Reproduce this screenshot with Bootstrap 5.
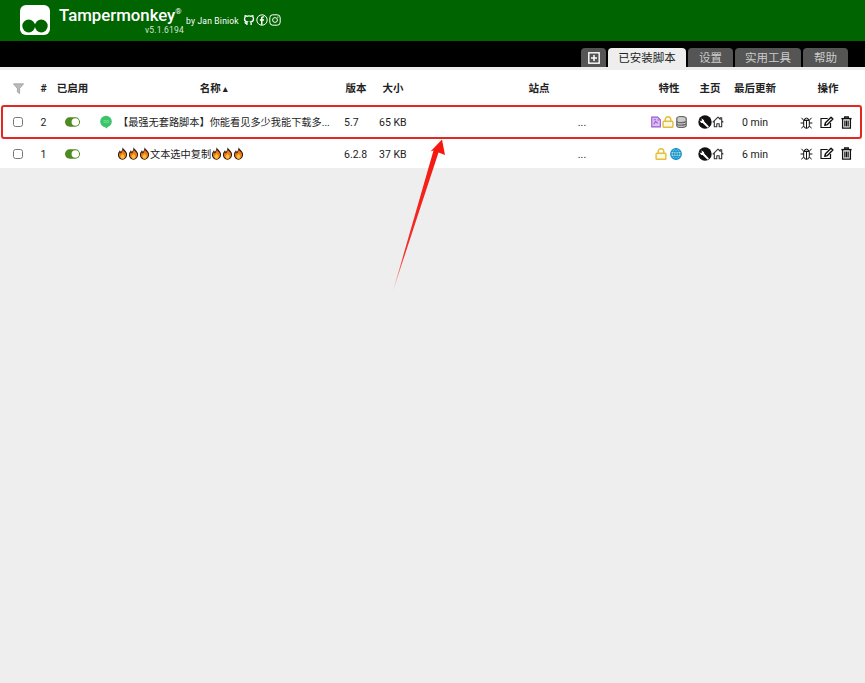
<!DOCTYPE html>
<html lang="zh">
<head>
<meta charset="utf-8">
<title>Tampermonkey</title>
<link href="https://cdn.jsdelivr.net/npm/bootstrap@5.3.0/dist/css/bootstrap.min.css" rel="stylesheet">
<style>
html,body{height:100%}
body{background:#eee;font-family:Roboto,"Noto Sans CJK SC",sans-serif;font-size:11px;color:#222;position:relative;overflow:hidden}
.tm-top{height:41px;background:#006400;color:#fff;padding-left:20px}
.tm-logo{width:30px;height:30px;margin-top:5px;flex:none}
.tm-title{margin-left:9px;position:relative;width:116px;height:41px}
.tm-name{font-size:16.8px;font-weight:500;line-height:20px;position:absolute;top:5px;left:0;white-space:nowrap}
.tm-name sup{font-size:8px;font-weight:400;top:-7px;position:relative;vertical-align:baseline;left:0}
.tm-ver{font-size:8.5px;line-height:10px;position:absolute;top:25px;right:-9px;color:#d5e6d5;white-space:nowrap;letter-spacing:.2px}
.tm-by{font-size:8.5px;margin-left:11px;margin-top:15px;line-height:12px;white-space:nowrap;letter-spacing:.2px}
.tm-soc{margin-top:14px;margin-left:4px;gap:1px}
.tm-bar{height:26px;background:#000;padding-right:17px}
.tm-tab{height:19px;background:#555;color:#ccc;border-radius:4px 4px 0 0;font-size:11.5px;line-height:20px;text-align:center;margin-left:2px;padding:0}
.tm-tab.tm-on{background:#eee;color:#222;height:19px}
.tm-tab-add{width:25px}.tm-tab1{width:78px}.tm-tab2{width:45px}.tm-tab3{width:66px}.tm-tab4{width:45px}
.tm-gap{height:3px}
.tm-table{table-layout:fixed;width:865px;margin:0;background:#fff;--bs-table-bg:#fff;font-size:10.5px}
.tm-table th,.tm-table td{border:0;padding:0;vertical-align:middle;white-space:nowrap;color:#222;box-shadow:none}
.tm-table th{height:35px;font-weight:700;font-size:10.5px;text-align:center;padding-top:2px}
.tm-r1 td{height:34px}
.tm-r2 td{height:29px}
.tm-r1 .tm-tx{padding-top:2px}
.tm-r2 .tm-tx{padding-top:3px}
.tm-check{width:10px;height:10px;margin:0;border:1px solid #777;border-radius:2px;display:block}
.tm-cc{padding-left:13px!important}
.tm-num{text-align:center}
.tm-sw{display:block;margin-left:10px}
.tm-r2 .tm-sw{margin-top:1px}
.tm-lname{font-size:10.2px}
.tm-r1 .tm-lname{padding-left:2px!important}
.tm-r2 .tm-lname{padding-left:1px!important}
.tm-pv{padding-left:6px!important}
.tm-ps{padding-left:5px!important}
.tm-site{text-align:center;padding-left:112px!important}
.tm-sh{padding-left:26px!important}
.tm-fh{padding-left:1px!important}
.tm-hh{padding-right:2px!important}
.tm-ah{padding-left:6px!important}
.tm-feat{text-align:right;padding-right:10px!important;line-height:0}
.tm-r2 .tm-feat{padding-right:15px!important}
.tm-feat svg,.tm-act svg,.tm-home svg{vertical-align:middle}
.tm-feat svg+svg{margin-left:-1px}
.tm-home{text-align:center;line-height:0;padding-right:1px!important}
.tm-mid{text-align:center}
.tm-act{line-height:0;padding-left:15px!important}
.tm-act svg{margin-right:7px}
.tm-flame{vertical-align:-2px}
.tm-box{position:absolute;left:1px;top:105px;width:861px;height:34px;border:2px solid #e5281f;border-radius:3px;pointer-events:none}
.tm-arrow{position:absolute;left:385px;top:135px;pointer-events:none}
</style>
</head>
<body>
<svg width="0" height="0" class="position-absolute">
<defs>
<symbol id="i-flame" viewBox="0 0 10 12"><path d="M5 .3C5.600 2 8 3 9 5.600c.9 2.900-1 6.100-4 6.100S.2 8.700 1 5.800C1.400 4.500 2.200 4 2.600 3c.5.600.8 1.100.9 1.700C4.500 3.500 5.100 2 5 .3z" fill="#2b1a10"/><path d="M5.100 2.200C5.700 3.500 7.700 4.400 8.200 6.200c.5 2.300-1.100 4.700-3.200 4.700S1.300 8.700 1.900 6.300c.3-.8.6-1.200.8-1.700.2.500.5 1 .6 1.500C4.400 5 5.200 3.700 5.100 2.200z" fill="#f0781e"/><path d="M5.100 6c.3.900 1.700 1.400 1.700 2.900 0 1.100-.8 1.900-1.800 1.900s-1.800-.8-1.800-1.900c0-1.300 1.400-1.600 1.900-2.900z" fill="#fbc02d"/></symbol>
<symbol id="i-toggle" viewBox="0 0 16 10"><rect x="0" y="0" width="16" height="10" rx="5" fill="#4d8a1f"/><circle cx="11" cy="5" r="4" fill="#fff"/></symbol>
<symbol id="i-lock" viewBox="0 0 12 12"><path d="M3.200 5.300V3.500a2.800 2.800 0 0 1 5.600 0v1.800" fill="none" stroke="#e3bd3c" stroke-width="1.400"/><rect x="1.100" y="5.300" width="9.800" height="5.900" rx=".8" fill="#fdf8e0" stroke="#e3bd3c" stroke-width="1.400"/></symbol>
<symbol id="i-wrench" viewBox="0 0 14 14"><circle cx="7" cy="7" r="6.700" fill="#111"/><path d="M3.500 3.200 6 5.200l.2 1.300 4.700 5-1.300 1.200-5-4.700-1.400-.1-1.800-2.700 1.500.9 1-.4z" fill="#fff"/></symbol>
<symbol id="i-home" viewBox="0 0 12 12"><path d="M.7 6.300 6 1.200l2.200 2.100V1.700h1.500V5l1.600 1.300M2.300 5.200v5.600h2.500V7.700h2.400v3.100h2.500V5.200" fill="none" stroke="#333" stroke-width="1.100" stroke-linejoin="round"/></symbol>
<symbol id="i-bug" viewBox="0 0 13 13"><path d="M4.300 4.300a2.200 2.200 0 0 1 4.400 0zM3.700 4.300h5.600v5.200a2.800 2.800 0 0 1-5.600 0zM6.500 4.300V12.300M1.500 1.800 3.700 4.300M11.500 1.800 9.300 4.300M.6 7h3.100M9.300 7h3.100M1.300 12.200l2.600-2.300M11.700 12.200 9.100 9.900" fill="none" stroke="#111" stroke-width="1"/></symbol>
<symbol id="i-edit" viewBox="0 0 14 13"><path d="M10.500 6.900v4.600H1V2.500h6.700" fill="none" stroke="#111" stroke-width="1.200"/><path d="M4.800 9.300l.7-2.600L11 1.200l1.900 1.900-5.500 5.500z" fill="#fff" stroke="#111" stroke-width="1.400" stroke-linejoin="round"/></symbol>
<symbol id="i-trash" viewBox="0 0 11 13"><path d="M.4 2.600h10.200" fill="none" stroke="#111" stroke-width="1.400"/><path d="M3.700 2.500V1h3.600v1.500M1.600 2.600v9.600h7.800V2.600M3.900 4.500v5.900M7.100 4.500v5.900" fill="none" stroke="#111" stroke-width="1.300"/><path d="M5.500 4.500v5.900" stroke="#111" stroke-width="1"/></symbol>
</defs>
</svg>

<header class="tm-top d-flex align-items-start">
  <svg class="tm-logo" viewBox="0 0 30 30"><rect width="30" height="30" rx="6" fill="#fff"/><circle cx="8.700" cy="21" r="6.400" fill="#006400"/><circle cx="21.300" cy="21" r="6.400" fill="#006400"/></svg>
  <div class="tm-title">
    <div class="tm-name">Tampermonkey<sup>®</sup></div>
    <div class="tm-ver">v5.1.6194</div>
  </div>
  <div class="tm-by">by Jan Biniok</div>
  <div class="tm-soc d-flex">
    <svg width="12" height="12" viewBox="0 0 12 12"><path d="M3.900 11V9.300C2.400 9.600 2 8.700 1.800 8.200M8.100 11V9.200c0-.7-.2-1-.5-1.300 1.600-.2 2.900-.9 2.900-3 0-.6-.2-1.200-.6-1.600.1-.6.1-1.200-.1-1.700-.6 0-1.200.3-1.700.7a5.500 5.500 0 0 0-4.200 0C3.400 1.900 2.800 1.600 2.200 1.600c-.2.500-.2 1.100-.1 1.700-.4.400-.6 1-.6 1.600 0 2.100 1.300 2.800 2.900 3-.3.300-.5.700-.5 1.300" fill="none" stroke="#fff" stroke-width="1.300"/></svg>
    <svg width="12" height="12" viewBox="0 0 12 12"><circle cx="6" cy="6" r="5.200" fill="none" stroke="#fff" stroke-width="1"/><path d="M6.500 10.800V6.800h1.400l.2-1.500H6.500v-.9c0-.5.200-.8.800-.8h.9V2.300H7c-1.300 0-2 .8-2 2v1H3.900v1.500H5v4z" fill="#fff"/></svg>
    <svg width="12" height="12" viewBox="0 0 12 12"><rect x=".8" y=".8" width="10.400" height="10.400" rx="3" fill="none" stroke="#fff" stroke-width="1"/><circle cx="6" cy="6" r="2.400" fill="none" stroke="#fff" stroke-width="1"/><circle cx="8.900" cy="3.100" r=".7" fill="#fff"/></svg>
  </div>
</header>

<nav class="tm-bar d-flex justify-content-end align-items-end">
  <div class="tm-tab tm-tab-add d-flex align-items-center justify-content-center">
    <svg width="12" height="12" viewBox="0 0 12 12"><rect x=".8" y=".8" width="10.400" height="10.400" fill="none" stroke="#fff" stroke-width="1.400"/><path d="M6 3v6M3 6h6" stroke="#fff" stroke-width="1.500"/></svg>
  </div>
  <div class="tm-tab tm-tab1 tm-on">已安装脚本</div>
  <div class="tm-tab tm-tab2">设置</div>
  <div class="tm-tab tm-tab3">实用工具</div>
  <div class="tm-tab tm-tab4">帮助</div>
</nav>
<div class="tm-gap"></div>

<table class="table tm-table">
  <colgroup>
    <col style="width:32px"><col style="width:23px"><col style="width:35px"><col style="width:26px"><col style="width:222px"><col style="width:36px"><col style="width:38px"><col style="width:228px"><col style="width:57px"><col style="width:28px"><col style="width:60px"><col style="width:80px">
  </colgroup>
  <thead>
    <tr>
      <th class="tm-cc"><svg class="d-block" width="11" height="11" viewBox="0 0 11 11"><path d="M.4.800h10.200L6.600 5.500v5L4.400 9V5.500z" fill="#bbb" stroke="#888" stroke-width=".6"/></svg></th>
      <th>#</th>
      <th>已启用</th>
      <th colspan="2">名称 <span class="small">▴</span></th>
      <th>版本</th>
      <th>大小</th>
      <th class="tm-sh">站点</th>
      <th class="tm-fh">特性</th>
      <th class="tm-hh">主页</th>
      <th>最后更新</th>
      <th class="tm-ah">操作</th>
    </tr>
  </thead>
  <tbody>
    <tr class="tm-r1">
      <td class="tm-cc"><input class="form-check-input tm-check" type="checkbox" aria-label="选择"></td>
      <td class="tm-num tm-tx">2</td>
      <td><svg class="tm-sw" width="15" height="10"><use href="#i-toggle"/></svg></td>
      <td><svg class="d-block ms-auto me-1" width="12" height="14" viewBox="0 0 12 14"><circle cx="6" cy="6.500" r="5.800" fill="#3cc46a"/><path d="M3 11l4 2.500 1-3z" fill="#3cc46a"/><text x="6" y="8" font-size="5" fill="#8fe2aa" text-anchor="middle">oo</text></svg></td>
      <td class="tm-lname tm-tx">【最强无套路脚本】你能看见多少我能下载多...</td>
      <td class="tm-pv tm-tx">5.7</td>
      <td class="tm-ps tm-tx">65 KB</td>
      <td class="tm-site tm-tx">...</td>
      <td class="tm-feat">
        <svg width="10" height="12" viewBox="0 0 11 12"><path d="M.8.600h6.500l3 3v7.800H.8z" fill="#dcc0f2" stroke="#9b59d0" stroke-width="1.200"/><path d="M3 3.500h2.500M3 8.500l2-3 2.500 2M7 3.800l2 0" fill="none" stroke="#9b59d0" stroke-width="1.300"/></svg>
        <svg width="12" height="12"><use href="#i-lock"/></svg>
        <svg width="11" height="12" viewBox="0 0 11 12"><ellipse cx="5.500" cy="2.300" rx="4.700" ry="1.800" fill="#ccc" stroke="#666" stroke-width="1.200"/><path d="M.8 2.300v7.400c0 1 2.100 1.800 4.700 1.800s4.700-.8 4.700-1.800V2.300" fill="#ccc" stroke="#666" stroke-width="1.200"/><path d="M.8 4.900c0 1 2.100 1.800 4.700 1.800s4.700-.8 4.700-1.800M.8 7.400c0 1 2.100 1.800 4.700 1.800s4.700-.8 4.700-1.800" fill="none" stroke="#666" stroke-width="1.200"/></svg>
      </td>
      <td class="tm-home"><svg width="14" height="14"><use href="#i-wrench"/></svg><svg width="12" height="12"><use href="#i-home"/></svg></td>
      <td class="tm-mid tm-tx">0 min</td>
      <td class="tm-act"><svg width="13" height="13"><use href="#i-bug"/></svg><svg width="14" height="13"><use href="#i-edit"/></svg><svg width="11" height="13"><use href="#i-trash"/></svg></td>
    </tr>
    <tr class="tm-r2">
      <td class="tm-cc"><input class="form-check-input tm-check" type="checkbox" aria-label="选择"></td>
      <td class="tm-num tm-tx">1</td>
      <td><svg class="tm-sw" width="15" height="10"><use href="#i-toggle"/></svg></td>
      <td></td>
      <td class="tm-lname tm-tx"><svg class="tm-flame" width="11" height="13"><use href="#i-flame"/></svg><svg class="tm-flame" width="11" height="13"><use href="#i-flame"/></svg><svg class="tm-flame" width="11" height="13"><use href="#i-flame"/></svg>文本选中复制<svg class="tm-flame" width="11" height="13"><use href="#i-flame"/></svg><svg class="tm-flame" width="11" height="13"><use href="#i-flame"/></svg><svg class="tm-flame" width="11" height="13"><use href="#i-flame"/></svg></td>
      <td class="tm-pv tm-tx">6.2.8</td>
      <td class="tm-ps tm-tx">37 KB</td>
      <td class="tm-site tm-tx">...</td>
      <td class="tm-feat">
        <svg width="12" height="12"><use href="#i-lock"/></svg>
        <svg class="ms-0" width="12" height="12" viewBox="0 0 12 12"><circle cx="6" cy="6" r="5.300" fill="#a8dcf2" stroke="#0f8fc4" stroke-width="1.200"/><path d="M.7 6h10.600M6 .7v10.600M1.700 3.300h8.600M1.700 8.700h8.600M6 .7C2.800 3.500 2.800 8.500 6 11.300M6 .7c3.200 2.800 3.200 7.800 0 10.600" fill="none" stroke="#0f8fc4" stroke-width=".9"/></svg>
      </td>
      <td class="tm-home"><svg width="14" height="14"><use href="#i-wrench"/></svg><svg width="12" height="12"><use href="#i-home"/></svg></td>
      <td class="tm-mid tm-tx">6 min</td>
      <td class="tm-act"><svg width="13" height="13"><use href="#i-bug"/></svg><svg width="14" height="13"><use href="#i-edit"/></svg><svg width="11" height="13"><use href="#i-trash"/></svg></td>
    </tr>
  </tbody>
</table>

<div class="tm-box"></div>
<svg class="tm-arrow" width="65" height="160" viewBox="385 135 65 160">
  <defs><linearGradient id="tm-fade" x1="442" y1="140" x2="393" y2="291" gradientUnits="userSpaceOnUse"><stop offset="0" stop-color="#f4160f"/><stop offset=".75" stop-color="#f4302a"/><stop offset="1" stop-color="#f4a09c"/></linearGradient></defs>
  <polygon points="442,139.500 445,155 438.500,152.500 393,291 433.500,150.500 430.500,151.500" fill="url(#tm-fade)"/>
</svg>
<script src="https://cdn.jsdelivr.net/npm/bootstrap@5.3.0/dist/js/bootstrap.bundle.min.js"></script>
</body>
</html>
